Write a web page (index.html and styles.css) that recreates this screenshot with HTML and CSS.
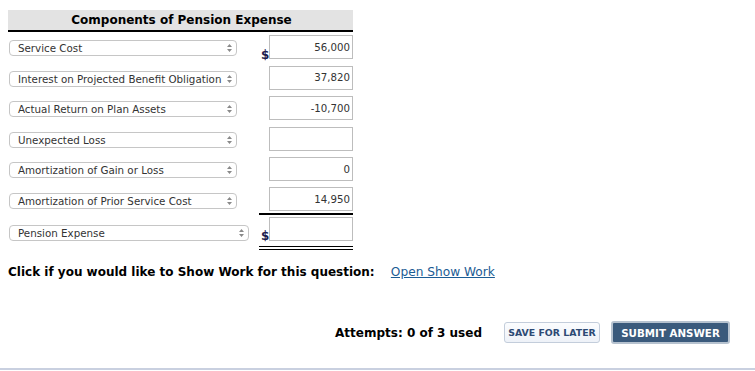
FILE: index.html
```html
<!DOCTYPE html>
<html lang="en">
<head>
    <meta charset="UTF-8">
    <title>Components of Pension Expense</title>
    <link rel="stylesheet" href="styles.css">
</head>
<body>

    <div class="panel">
        <div class="panel-title">Components of Pension Expense</div>

        <div class="row">
            <div class="sel-cell"><div class="select">Service Cost<svg class="arrows" width="5" height="8" viewBox="0 0 5 8"><path d="M2.5 0L5 3H0z M2.5 8L5 5H0z"/></svg></div></div>
            <div class="amt-cell"><span class="dollar">$</span><input type="text" value="56,000"></div>
        </div>
        <div class="row">
            <div class="sel-cell"><div class="select">Interest on Projected Benefit Obligation<svg class="arrows" width="5" height="8" viewBox="0 0 5 8"><path d="M2.5 0L5 3H0z M2.5 8L5 5H0z"/></svg></div></div>
            <div class="amt-cell"><span class="dollar"></span><input type="text" value="37,820"></div>
        </div>
        <div class="row">
            <div class="sel-cell"><div class="select">Actual Return on Plan Assets<svg class="arrows" width="5" height="8" viewBox="0 0 5 8"><path d="M2.5 0L5 3H0z M2.5 8L5 5H0z"/></svg></div></div>
            <div class="amt-cell"><span class="dollar"></span><input type="text" value="-10,700"></div>
        </div>
        <div class="row">
            <div class="sel-cell"><div class="select">Unexpected Loss<svg class="arrows" width="5" height="8" viewBox="0 0 5 8"><path d="M2.5 0L5 3H0z M2.5 8L5 5H0z"/></svg></div></div>
            <div class="amt-cell"><span class="dollar"></span><input type="text" value=""></div>
        </div>
        <div class="row">
            <div class="sel-cell"><div class="select">Amortization of Gain or Loss<svg class="arrows" width="5" height="8" viewBox="0 0 5 8"><path d="M2.5 0L5 3H0z M2.5 8L5 5H0z"/></svg></div></div>
            <div class="amt-cell"><span class="dollar"></span><input type="text" value="0"></div>
        </div>
        <div class="row">
            <div class="sel-cell"><div class="select">Amortization of Prior Service Cost<svg class="arrows" width="5" height="8" viewBox="0 0 5 8"><path d="M2.5 0L5 3H0z M2.5 8L5 5H0z"/></svg></div></div>
            <div class="amt-cell"><span class="dollar"></span><input type="text" value="14,950"></div>
        </div>
        <div class="row total">
            <div class="sel-cell"><div class="select wide">Pension Expense<svg class="arrows" width="5" height="8" viewBox="0 0 5 8"><path d="M2.5 0L5 3H0z M2.5 8L5 5H0z"/></svg></div></div>
            <div class="amt-cell"><span class="dollar">$</span><input type="text" value=""></div>
        </div>
    </div>

    <p class="show-work">Click if you would like to Show Work for this question: <a href="#">Open Show Work</a></p>

    <div class="actions">
        <span class="attempts">Attempts: 0 of 3 used</span>
        <button class="btn-save">SAVE FOR LATER</button>
        <button class="btn-submit">SUBMIT ANSWER</button>
    </div>

</body>
</html>
```

FILE: styles.css
```css
* {
    margin: 0;
    padding: 0;
    box-sizing: border-box;
}

body {
    font-family: Verdana, 'DejaVu Sans', sans-serif;
    color: #000;
    background: #fff;
    width: 755px;
    height: 370px;
    overflow: hidden;
    border-bottom: 2px solid #c9d0e0;
}

.panel {
    width: 345px;
    margin: 10px 0 0 8px;
}

.panel-title {
    height: 22px;
    line-height: 20px;
    background-color: #e3e3e3;
    border-bottom: 2px solid #000;
    font-size: 12px;
    font-weight: bold;
    text-align: center;
    padding-left: 2px;
}

.row {
    display: flex;
    align-items: center;
    height: 30.5px;
}

.row:first-of-type {
    margin-top: 2px;
}

.sel-cell {
    width: 251px;
    padding: 2px 0 0 1px;
}

.select {
    width: 228px;
    height: 16px;
    border: 1px solid #c6c6c6;
    border-radius: 4px;
    font-size: 10.3px;
    line-height: 14px;
    white-space: nowrap;
    color: #333;
    padding-left: 8px;
    display: flex;
    align-items: center;
    justify-content: space-between;
    padding-right: 4px;
    background: #fff;
}

.select.wide {
    width: 240px;
}

.arrows {
    fill: #8a8a8a;
    flex-shrink: 0;
}

.amt-cell {
    display: flex;
    align-items: center;
    width: 94px;
}

.dollar {
    width: 10px;
    font-size: 12px;
    font-weight: bold;
    color: #1d1d4f;
    padding-left: 2px;
    align-self: flex-end;
    line-height: 12px;
    margin-bottom: -2px;
}

.amt-cell input {
    width: 84px;
    height: 24px;
    border: 1px solid #bdbdbd;
    font-family: Verdana, 'DejaVu Sans', sans-serif;
    font-size: 10.2px;
    color: #333;
    text-align: right;
    padding-right: 2px;
}

.row:nth-of-type(7) .amt-cell {
    border-bottom: 2px solid #000;
    padding-bottom: 2px;
    align-self: flex-end;
}

.row.total {
    height: 37px;
    align-items: flex-start;
}

.row.total .sel-cell {
    padding-top: 10px;
}

.row.total .amt-cell {
    padding: 2px 0 5px;
    border-bottom: 4px double #000;
}

.row.total .dollar {
    margin-bottom: -1px;
}

.show-work {
    margin: 13px 0 0 8px;
    font-size: 12px;
    font-weight: bold;
}

.show-work a {
    font-weight: normal;
    font-size: 12.2px;
    color: #1c5c94;
    margin-left: 12px;
}

.actions {
    display: flex;
    align-items: center;
    justify-content: flex-end;
    padding-right: 25px;
    margin-top: 42px;
}

.attempts {
    font-size: 12px;
    font-weight: bold;
    margin-right: 22px;
}

button {
    font-family: Verdana, 'DejaVu Sans', sans-serif;
    font-weight: bold;
    cursor: pointer;
    border-radius: 3px;
}

.btn-save {
    width: 96px;
    height: 21px;
    font-size: 9.4px;
    color: #2d4a74;
    background: linear-gradient(#fbfcfe, #eef2f8);
    border: 1px solid #c3cddb;
    margin-right: 11px;
}

.btn-submit {
    width: 119px;
    height: 23px;
    font-size: 10.3px;
    color: #fff;
    background-color: #3a5a7c;
    border: 2px solid #b6c2cf;
}
```
